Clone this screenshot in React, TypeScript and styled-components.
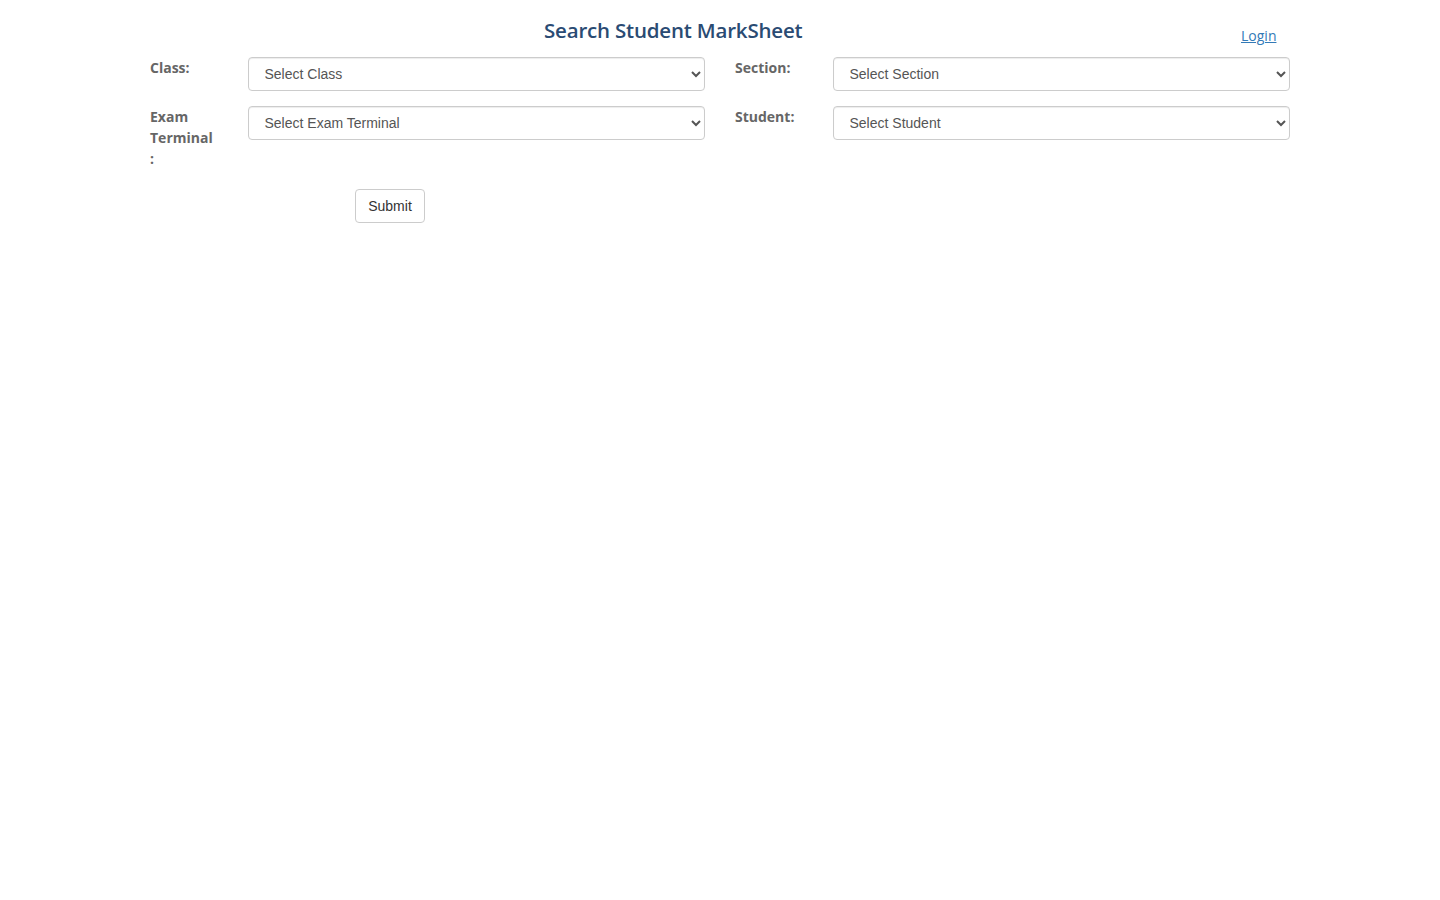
import React from "react";
import styled, { createGlobalStyle } from "styled-components";

const Global = createGlobalStyle`
  * { box-sizing: border-box; }
  body { margin: 0; background: #fff; font-family: "Open Sans", "Liberation Sans", sans-serif; font-size: 14px; line-height: 1.42857; color: #333; }
`;

const Container = styled.div`
  width: 1170px;
  margin: 0 auto;
  padding: 0 15px;
`;

const Row = styled.div`
  display: flex;
  margin: 0 -15px;
`;

const Col = styled.div<{ $span: number }>`
  width: ${(p) => (p.$span / 12) * 100}%;
  padding: 0 15px;
`;

const Title = styled.h3`
  margin: 15px 0 12px;
  padding-left: 4px;
  text-align: center;
  font-family: "Open Sans", sans-serif;
  font-weight: 600;
  font-size: 20.5px;
  line-height: 30px;
  color: #2a4b73;
  letter-spacing: -0.2px;
`;

const LoginLink = styled.a`
  display: block;
  text-align: center;
  margin-top: 26px;
  color: #337ab7;
  text-decoration: underline;
  font-size: 14px;
  padding-left: 5px;
`;

const FormGroup = styled.div`
  display: flex;
  margin: 0 -15px 15px;
`;

const Label = styled.label`
  width: ${(2 / 12) * 100}%;
  padding: 0 15px;
  font-weight: 700;
  color: #666;
  font-size: 14px;
  line-height: 21px;
`;

const Field = styled.div`
  width: ${(10 / 12) * 100}%;
  padding: 0 15px;
`;

const Select = styled.select`
  width: 100%;
  height: 34px;
  padding: 6px 12px;
  font-family: "Liberation Sans", Arial, sans-serif;
  font-size: 14px;
  color: #555;
  background: #fff;
  border: 1px solid #ccc;
  border-radius: 4px;
  box-shadow: inset 0 1px 1px rgba(0, 0, 0, 0.075);
`;

const SubmitRow = styled.div`
  padding-left: 205px;
  margin-top: 5px;
`;

const Button = styled.button`
  height: 34px;
  width: 70px;
  padding: 6px 12px;
  font-family: "Liberation Sans", Arial, sans-serif;
  font-size: 14px;
  color: #333;
  background: #fff;
  border: 1px solid #ccc;
  border-radius: 4px;
  cursor: pointer;
`;

export default function App() {
  return (
    <>
      <Global />
      <Container>
        <Row>
          <Col $span={11}>
            <Title>Search Student MarkSheet</Title>
          </Col>
          <Col $span={1}>
            <LoginLink href="#">Login</LoginLink>
          </Col>
        </Row>
        <Row>
          <Col $span={6}>
            <FormGroup>
              <Label>Class:</Label>
              <Field>
                <Select defaultValue="">
                  <option value="">Select Class</option>
                </Select>
              </Field>
            </FormGroup>
            <FormGroup>
              <Label>Exam Terminal :</Label>
              <Field>
                <Select defaultValue="">
                  <option value="">Select Exam Terminal</option>
                </Select>
              </Field>
            </FormGroup>
          </Col>
          <Col $span={6}>
            <FormGroup>
              <Label>Section:</Label>
              <Field>
                <Select defaultValue="">
                  <option value="">Select Section</option>
                </Select>
              </Field>
            </FormGroup>
            <FormGroup>
              <Label>Student:</Label>
              <Field>
                <Select defaultValue="">
                  <option value="">Select Student</option>
                </Select>
              </Field>
            </FormGroup>
          </Col>
        </Row>
        <SubmitRow>
          <Button type="button">Submit</Button>
        </SubmitRow>
      </Container>
    </>
  );
}
